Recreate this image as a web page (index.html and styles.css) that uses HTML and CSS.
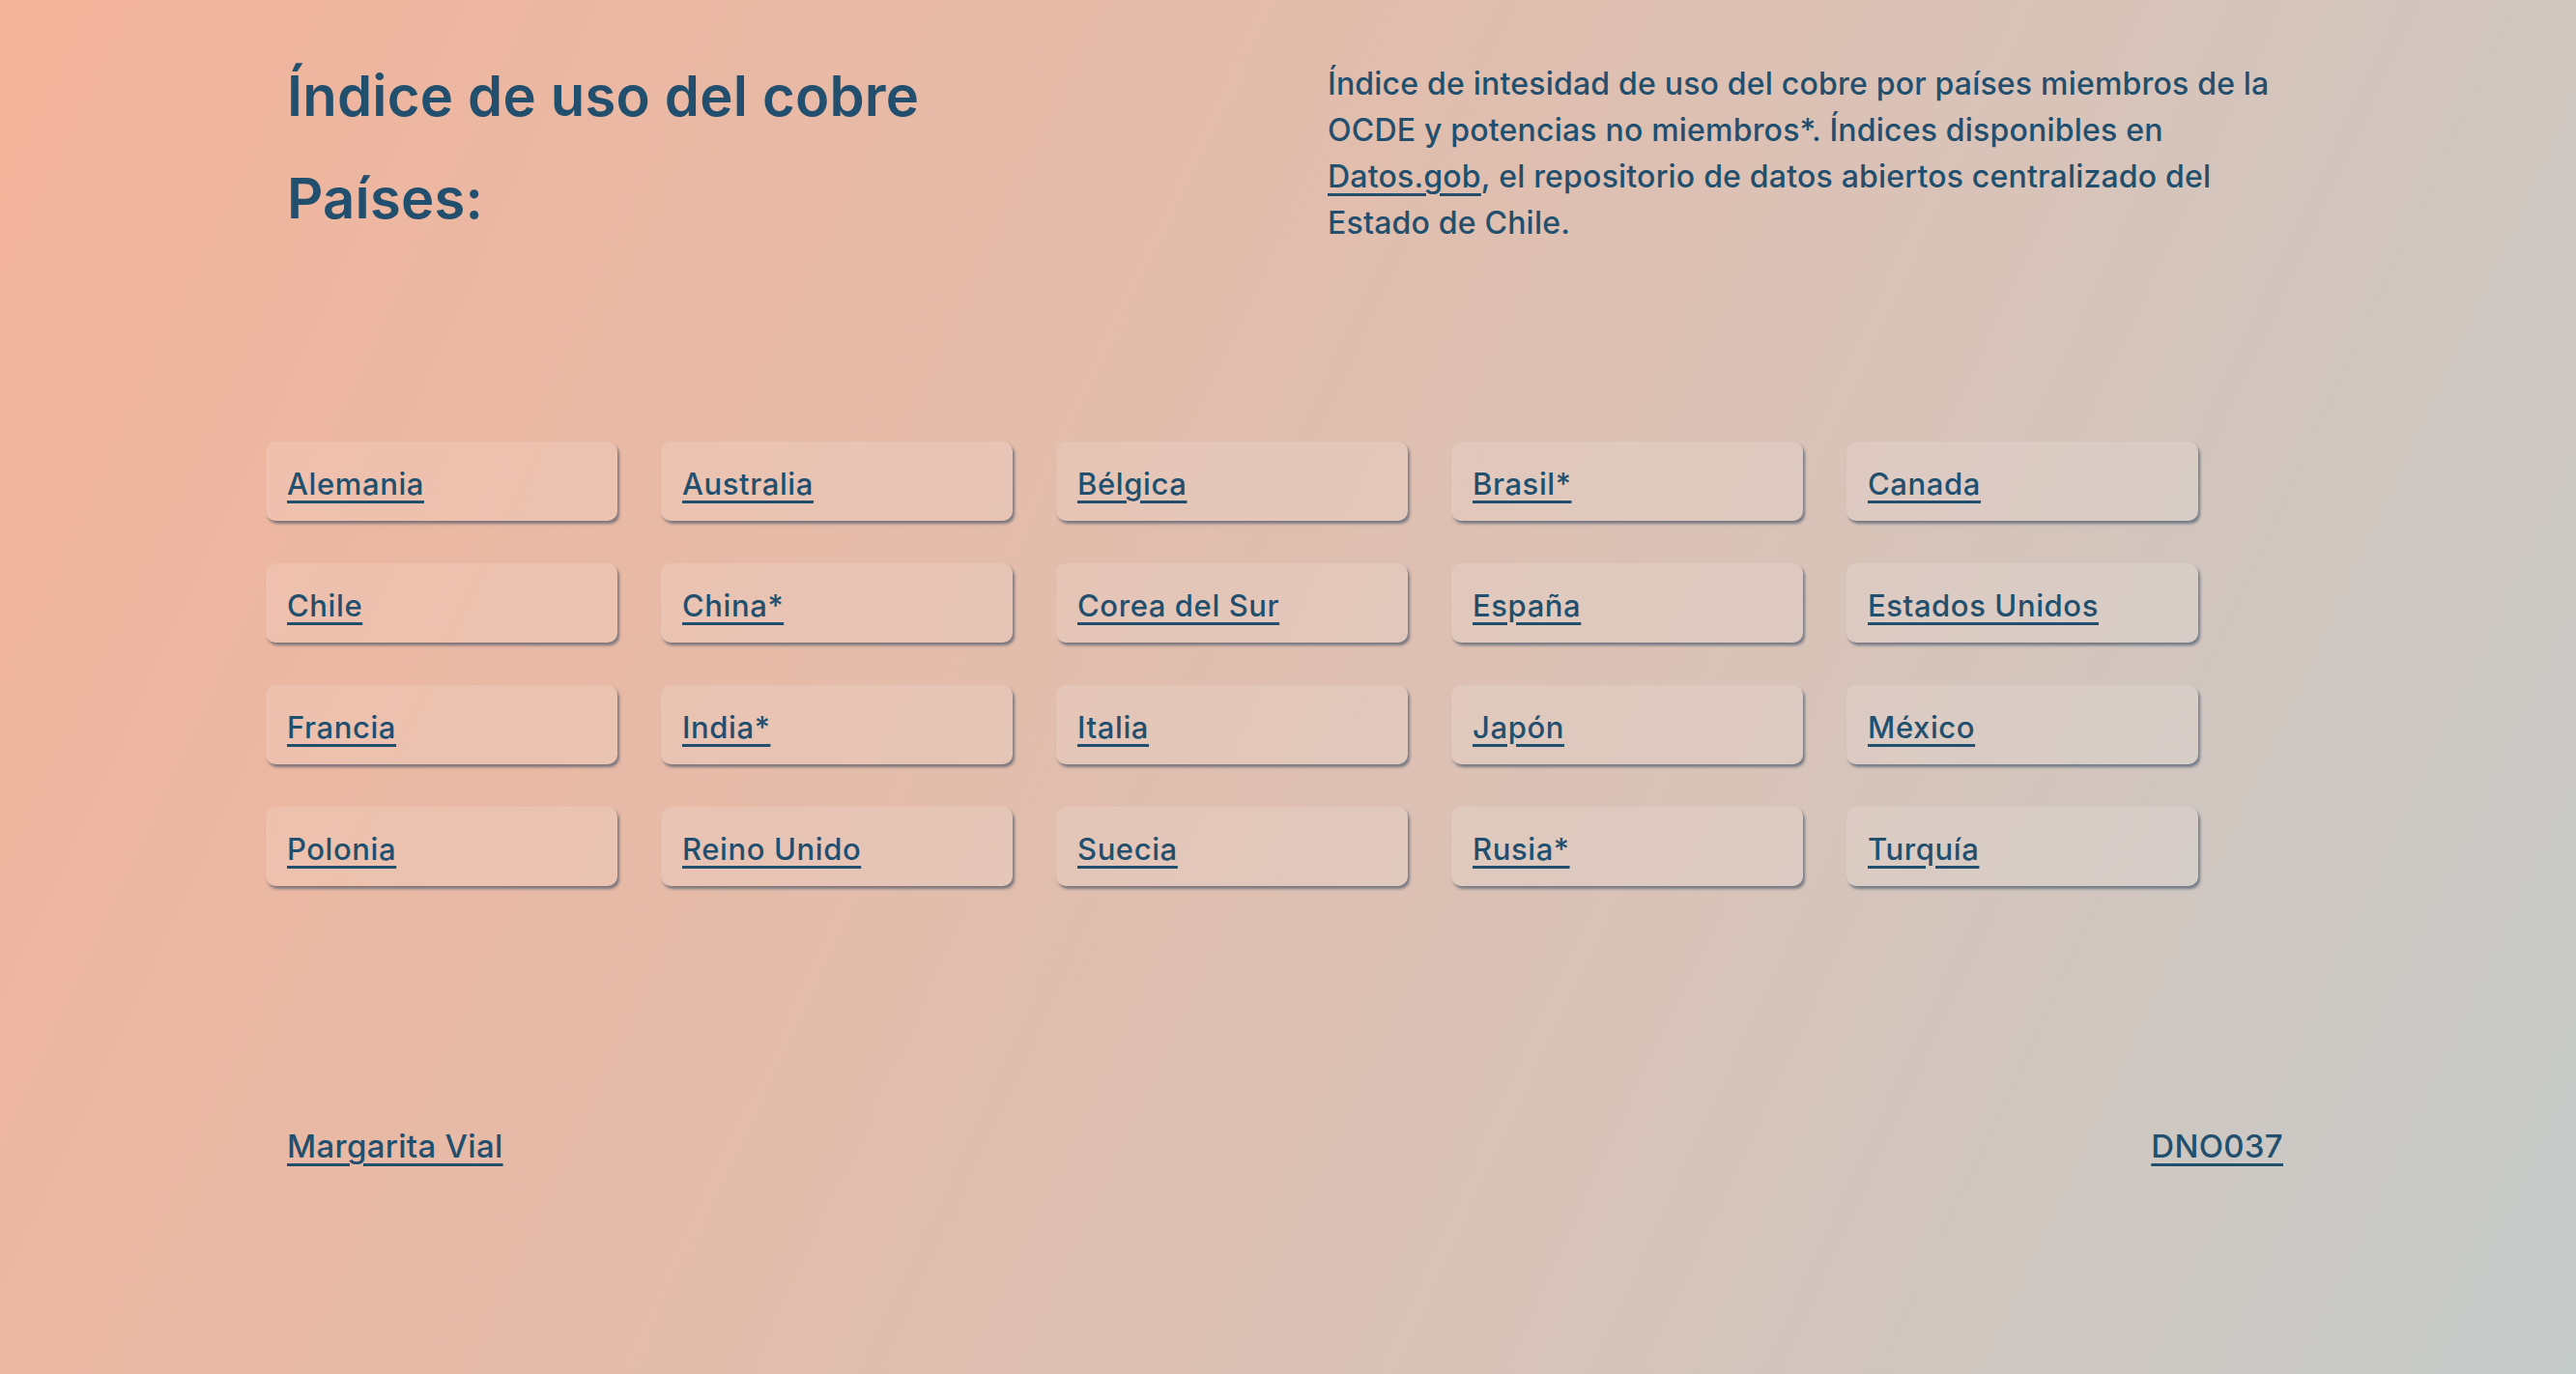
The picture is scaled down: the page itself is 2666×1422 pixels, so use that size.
FILE: index.html
```html
<!DOCTYPE html>
<html lang="es">
<head>
<meta charset="utf-8">
<title>Índice de uso del cobre</title>
<link rel="stylesheet" href="styles.css">
</head>
<body>
<div class="page">
  <header class="top">
    <div class="titles">
      <h1 class="title">Índice de uso del cobre</h1>
      <h2 class="subtitle">Países:</h2>
    </div>
    <p class="intro">Índice de intesidad de uso del cobre por países miembros de la OCDE y potencias no miembros*. Índices disponibles en <a href="#" class="link">Datos.gob</a>, el repositorio de datos abiertos centralizado del Estado de Chile.</p>
  </header>

  <main class="grid">
    <div class="card"><a href="#" class="link">Alemania</a></div>
    <div class="card"><a href="#" class="link">Australia</a></div>
    <div class="card"><a href="#" class="link">Bélgica</a></div>
    <div class="card"><a href="#" class="link">Brasil*</a></div>
    <div class="card"><a href="#" class="link">Canada</a></div>
    <div class="card"><a href="#" class="link">Chile</a></div>
    <div class="card"><a href="#" class="link">China*</a></div>
    <div class="card"><a href="#" class="link">Corea del Sur</a></div>
    <div class="card"><a href="#" class="link">España</a></div>
    <div class="card"><a href="#" class="link">Estados Unidos</a></div>
    <div class="card"><a href="#" class="link">Francia</a></div>
    <div class="card"><a href="#" class="link">India*</a></div>
    <div class="card"><a href="#" class="link">Italia</a></div>
    <div class="card"><a href="#" class="link">Japón</a></div>
    <div class="card"><a href="#" class="link">México</a></div>
    <div class="card"><a href="#" class="link">Polonia</a></div>
    <div class="card"><a href="#" class="link">Reino Unido</a></div>
    <div class="card"><a href="#" class="link">Suecia</a></div>
    <div class="card"><a href="#" class="link">Rusia*</a></div>
    <div class="card"><a href="#" class="link">Turquía</a></div>
  </main>

  <footer class="foot">
    <a href="#" class="link">Margarita Vial</a>
    <a href="#" class="link">DNO037</a>
  </footer>
</div>
</body>
</html>
```

FILE: styles.css
```css
html, body {
  margin: 0;
  padding: 0;
}

body {
  min-height: 100vh;
  background: linear-gradient(115deg, #f3b39a 0%, #e4bcaa 38%, #d8c3b9 66%, #c5cbca 100%);
  font-family: "Inter", "Lato", "Liberation Sans", sans-serif;
  color: #214f6d;
}

.page {
  width: 2110px;
  margin-left: 275px;
  padding-top: 63px;
}

.top {
  display: grid;
  grid-template-columns: 1077px 1fr;
  padding: 0 22px;
}

.title,
.subtitle {
  margin: 0;
  font-size: 58px;
  line-height: 72px;
  font-weight: 600;
  letter-spacing: 0.2px;
}

.subtitle {
  margin-top: 34px;
}

.intro {
  margin: 0;
  font-size: 32px;
  line-height: 48px;
  font-weight: 500;
  letter-spacing: 0.2px;
  max-width: 990px;
}

.link {
  color: #214f6d;
  text-decoration: underline;
  text-underline-offset: 6px;
  text-decoration-thickness: 2.5px;
}

.grid {
  display: grid;
  grid-template-columns: repeat(5, 364px);
  column-gap: 45px;
  row-gap: 44px;
  margin-top: 202px;
}

.card {
  height: 82px;
  box-sizing: border-box;
  display: flex;
  align-items: center;
  padding: 4px 22px 0;
  border-radius: 10px;
  background: rgba(255, 255, 255, 0.13);
  box-shadow: 2px 3px 3px rgba(38, 62, 90, 0.55);
  font-size: 31px;
  font-weight: 500;
  letter-spacing: 0.6px;
}

.foot {
  display: flex;
  justify-content: space-between;
  padding: 0 22px;
  margin-top: 245px;
  font-size: 33px;
  line-height: 48px;
  font-weight: 500;
  letter-spacing: 0.3px;
}
```
